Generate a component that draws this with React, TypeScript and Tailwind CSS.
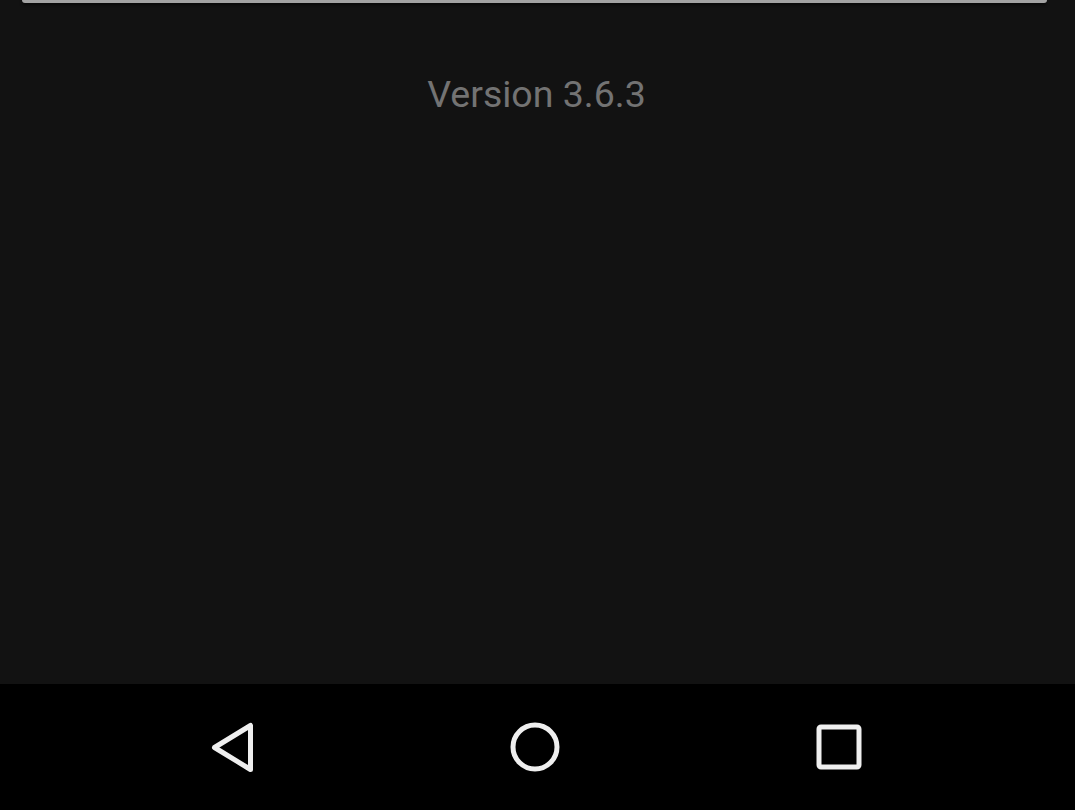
export default function App() {
  return (
    <div className="flex h-[810px] w-[1075px] flex-col bg-[#121212] font-['Roboto',sans-serif]">
      <div className="flex-1">
        {/* bottom edge of the card above, scrolled mostly out of view */}
        <div className="ml-[22px] mr-[28px] h-[3px] rounded-b-[3px] bg-[#a3a3a3] shadow-[0_2px_3px_rgba(0,0,0,0.6)]" />
        <p className="mt-[70px] pr-[2px] text-center text-[37.5px] leading-[42px] text-[#737373]">
          Version 3.6.3
        </p>
      </div>

      <div className="flex h-[126px] items-center justify-center gap-[244px] bg-black pr-[5px]">
        <button className="flex h-[60px] w-[60px] items-center justify-center">
          <svg width="60" height="60" viewBox="0 0 60 60" fill="none">
            <path
              d="M13.5 30.5 L49.5 8.5 L49.5 52.5 Z"
              stroke="#efefef"
              strokeWidth="5"
              strokeLinejoin="round"
            />
          </svg>
        </button>
        <button className="flex h-[60px] w-[60px] items-center justify-center">
          <svg width="60" height="60" viewBox="0 0 60 60" fill="none">
            <circle cx="30" cy="30" r="22" stroke="#efefef" strokeWidth="5" />
          </svg>
        </button>
        <button className="flex h-[60px] w-[60px] items-center justify-center">
          <svg width="60" height="60" viewBox="0 0 60 60" fill="none">
            <rect x="10" y="10" width="40" height="40" rx="2" stroke="#efefef" strokeWidth="5" />
          </svg>
        </button>
      </div>
    </div>
  );
}
